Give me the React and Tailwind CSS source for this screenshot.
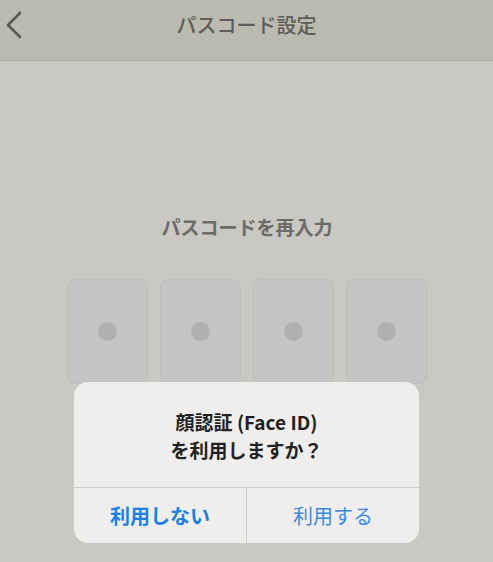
import React from 'react';

const font = { fontFamily: '"Noto Sans CJK JP", "Noto Sans", sans-serif' };

const PinBox = () => (
    <div className="w-[81px] h-[105px] rounded-lg bg-[#c4c4c3] border border-[#bdbdbb] flex items-center justify-center">
        <div className="w-[19px] h-[19px] rounded-full bg-[#b0b0af]" />
    </div>
);

const App = () => {
    return (
        <div className="w-[493px] h-[562px] bg-[#c9c8c3] flex flex-col overflow-hidden" style={font}>
            <div className="h-[61px] bg-[#bbbaaf] border-b border-[#a9a89f] flex items-center relative shrink-0">
                <svg className="absolute left-[4px] top-[11px]" width="20" height="28" viewBox="0 0 20 28" fill="none">
                    <path d="M16 2 L4 14 L16 26" stroke="#585856" strokeWidth="2.6" strokeLinecap="round" strokeLinejoin="round" />
                </svg>
                <h1 className="flex-1 text-center text-[20px] font-medium text-[#5d5d5b] -mt-[11px]">パスコード設定</h1>
            </div>

            <div className="flex flex-col items-center pt-[156px]">
                <p className="text-[19px] font-bold text-[#6b6b69] leading-none pl-[1px]">パスコードを再入力</p>
                <div className="flex gap-[12px] mt-[43px]">
                    <PinBox />
                    <PinBox />
                    <PinBox />
                    <PinBox />
                </div>
            </div>

            <div className="absolute left-[74px] top-[382px] w-[345px] h-[161px] rounded-[14px] bg-[#efeeec] flex flex-col overflow-hidden">
                <div className="h-[105px] flex flex-col items-center justify-center text-[19px] font-bold text-[#222] leading-[28px] pt-[2px]">
                    <p>顔認証 (Face ID)</p>
                    <p>を利用しますか？</p>
                </div>
                <div className="flex flex-1 border-t border-[#cfcecb]">
                    <button className="flex-1 text-[20px] font-bold text-[#1b7fe3] border-r border-[#cfcecb]">利用しない</button>
                    <button className="flex-1 text-[20px] text-[#3b8ae0]">利用する</button>
                </div>
            </div>
        </div>
    );
};

export default App;
